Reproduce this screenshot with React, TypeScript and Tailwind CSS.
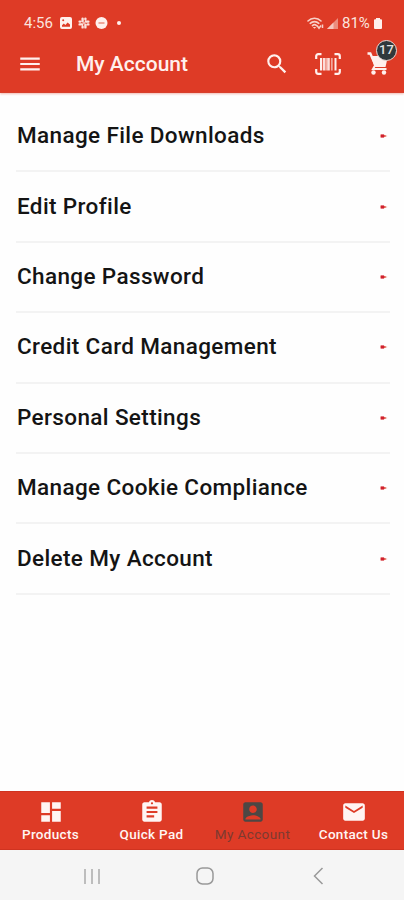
import {
  MdAccountBox,
  MdAssignment,
  MdDashboard,
  MdEmail,
  MdMenu,
  MdSearch,
} from "react-icons/md";

const menuItems = [
  "Manage File Downloads",
  "Edit Profile",
  "Change Password",
  "Credit Card Management",
  "Personal Settings",
  "Manage Cookie Compliance",
  "Delete My Account",
];

const tabs = [
  { label: "Products", icon: MdDashboard },
  { label: "Quick Pad", icon: MdAssignment },
  { label: "My Account", icon: MdAccountBox, active: true },
  { label: "Contact Us", icon: MdEmail },
];

function StatusBar() {
  return (
    <div className="flex h-[46px] items-center pl-6 pr-[22px] text-[#fbe3de]">
      <span className="w-[36px] whitespace-nowrap text-[15px]">4:56</span>
      {/* Gallery */}
      <svg width="12" height="12" viewBox="0 0 12 12">
        <path
          fillRule="evenodd"
          fill="#fff0ed"
          d="M2 0h8a2 2 0 0 1 2 2v8a2 2 0 0 1-2 2H2a2 2 0 0 1-2-2V2a2 2 0 0 1 2-2zM2 9.8h8V7.6L7.6 5.4 5.4 8 3.8 6.6 2 8.2zM2.2 3.2a1 1 0 1 0 2 0 1 1 0 0 0-2 0z"
        />
      </svg>
      {/* Slack */}
      <svg className="ml-1.5" width="12" height="12" viewBox="0 0 12 12">
        <g stroke="#fbe3de" strokeWidth="2.4" strokeLinecap="round">
          <path d="M4.6 1.6v2.6M1.6 4.6h.6M7.4 1.6v.6M7.8 4.6h2.6M4.6 9.8v.6M1.6 7.4h2.6M7.4 7.8v2.6M9.8 7.4h.6" />
        </g>
        <path d="M5 5h2v2H5z" fill="#f3b5aa" />
      </svg>
      {/* Do not disturb */}
      <svg className="ml-[5px]" width="13" height="12" viewBox="0 0 13 12">
        <circle cx="6.5" cy="6" r="6" fill="#fff0ed" />
        <path d="M3.5 6h6" stroke="#eb9385" strokeWidth="1.6" />
      </svg>
      <span className="ml-[9px] size-1 rounded-full bg-[#fff0ed]" />

      {/* Wifi */}
      <svg className="ml-auto" width="17" height="13" viewBox="0 0 17 13" fill="none">
        <g stroke="#f8d0c8" strokeWidth="1.6" strokeLinecap="round">
          <path d="M1 4C4.5 .3 10.5 .3 14 4" />
          <path d="M3.2 6.3C5.6 4 9.4 4 11.8 6.3" />
          <path d="M5.4 8.6C6.8 7.4 8.2 7.4 9.6 8.6" />
        </g>
        <path d="M7.5 11.8L5.8 10h3.4z" fill="#f8d0c8" />
        <path d="M10 8.5l2 2.8 2-2.8M15.5 11V7.5" stroke="#f8d0c8" strokeWidth="1.5" />
      </svg>
      {/* Signal */}
      <svg className="ml-[3px]" width="11" height="11" viewBox="0 0 11 11">
        <path d="M11 0v11H0z" fill="#ec8c7d" />
        <path d="M6.5 4.5V11H0z" fill="#f6c6bd" />
      </svg>
      <span className="ml-1 w-[30px] whitespace-nowrap text-[15px]">81%</span>
      {/* Battery */}
      <svg className="ml-[2px]" width="8" height="11" viewBox="0 0 8 11">
        <path d="M2 0h4v1.2h1a1 1 0 0 1 1 1V10a1 1 0 0 1-1 1H1a1 1 0 0 1-1-1V2.2a1 1 0 0 1 1-1h1z" fill="#fff0ed" />
      </svg>
    </div>
  );
}

function BarcodeIcon() {
  return (
    <svg width="26" height="22" viewBox="0 0 26 22" fill="none" stroke="#fff0ed">
      <path
        d="M1.2 6V3.2a2 2 0 0 1 2-2h3.3M19.5 1.2h3.3a2 2 0 0 1 2 2V6M24.8 16v2.8a2 2 0 0 1-2 2h-3.3M6.5 20.8H3.2a2 2 0 0 1-2-2V16"
        strokeWidth="2.2"
      />
      <path d="M6 5v12.5M20.5 5v12.5" strokeWidth="2" />
      <path d="M9 5v12.5M13.5 5v12.5" strokeWidth="2.6" opacity="0.9" />
      <path d="M11.3 5v12.5M16.8 5v12.5" strokeWidth="1.8" opacity="0.6" />
    </svg>
  );
}

function CartIcon() {
  return (
    <svg width="22" height="24" viewBox="0 0 22 24" fill="none">
      <path d="M.5 1.5h2.8l5 11.5" stroke="#fff0ed" strokeWidth="2.4" />
      <path d="M4 4h17l-2.5 11H7.5z" fill="#fff0ed" />
      <path d="M8 13.5L6 17h13.5" stroke="#fff0ed" strokeWidth="2" />
      <circle cx="6.5" cy="20.5" r="2.2" fill="#fff0ed" />
      <circle cx="17" cy="20.5" r="2.2" fill="#fff0ed" />
    </svg>
  );
}

export default function App() {
  return (
    <div
      className="flex h-[900px] w-[404px] flex-col overflow-hidden bg-[#fefefe]"
      style={{ fontFamily: 'Roboto, "Liberation Sans", sans-serif' }}
    >
      <header className="h-[93px] shrink-0 border-b border-[#d8402c] bg-[#de3b26] shadow-[0_1px_2px_rgba(222,59,38,0.35)]">
        <StatusBar />
        <div className="flex h-[35px] items-center pl-[17px] pr-[15px] text-[#fff0ed]">
          <MdMenu size={26} />
          <h1 className="ml-[33px] pt-[2px] text-[21px] font-medium">My Account</h1>
          <MdSearch size={26} className="ml-auto" />
          <div className="ml-[25px]">
            <BarcodeIcon />
          </div>
          <div className="relative ml-[26px]">
            <CartIcon />
            <span className="absolute -top-[12px] left-[9px] flex size-[21px] items-center justify-center rounded-full border-[1.5px] border-[#e9d9d5] bg-[#30383b] text-[13px] font-medium text-[#e4e4e4]">
              17
            </span>
          </div>
        </div>
      </header>

      <main className="flex-1 pl-4 pr-[14px] pt-[9px]">
        {menuItems.map((item) => (
          <div
            key={item}
            className="flex h-[70.4px] items-center justify-between border-b-2 border-[#f3f3f3] pl-px"
          >
            <span className="text-[22.5px] font-medium tracking-[0.37px] text-[#141414]">
              {item}
            </span>
            <svg className="mr-[2px]" width="8" height="4" viewBox="0 0 8 4">
              <path d="M0 .5h3.5L7.5 2l-4 1.5H0z" fill="#ef9a90" />
              <path d="M1 .5h3v3H1z" fill="#cf2030" />
              <path d="M4 1h1.5v2H4z" fill="#e0604f" />
            </svg>
          </div>
        ))}
      </main>

      <nav className="flex h-[59px] shrink-0 border-y border-[#cf3320] bg-[#de3b26]">
        {tabs.map(({ label, icon: Icon, active }) => (
          <div
            key={label}
            className={`flex flex-1 flex-col items-center pt-[7px] ${
              active ? "text-[#4d4744]" : "text-[#fff5f3]"
            }`}
          >
            <Icon size={26} />
            <span
              className={`-mt-px whitespace-nowrap text-[13.5px] leading-[20px] ${
                active
                  ? "tracking-[0.4px] text-[#7c3a31]"
                  : "font-medium tracking-[0.3px]"
              }`}
            >
              {label}
            </span>
          </div>
        ))}
      </nav>

      {/* Android navigation */}
      <div className="flex h-[50px] shrink-0 items-center bg-[#f5f5f5] pl-[84px] pt-[2px]">
        <svg width="16" height="17" viewBox="0 0 16 17" stroke="#b0b0b0" strokeWidth="1.6">
          <path d="M1 1v15M8 1v15M15 1v15" />
        </svg>
        <svg className="ml-[96px]" width="18" height="18" viewBox="0 0 18 18" fill="none" stroke="#999" strokeWidth="1.5">
          <rect x="1" y="1" width="16" height="16" rx="5.5" />
        </svg>
        <svg className="ml-[99px]" width="11" height="18" viewBox="0 0 11 18" fill="none" stroke="#999" strokeWidth="1.5">
          <path d="M9.5 1l-8 8 8 8" />
        </svg>
      </div>
    </div>
  );
}
